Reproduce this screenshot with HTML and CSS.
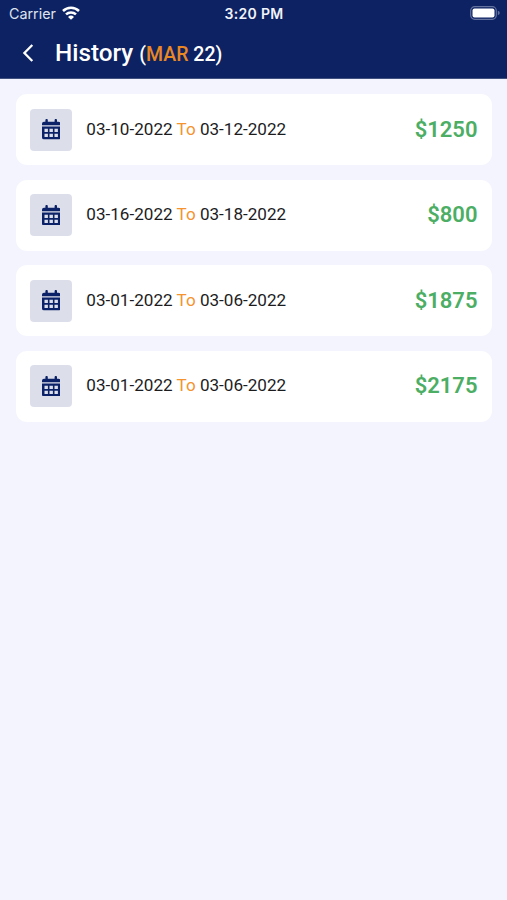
FILE: index.html
```html
<!DOCTYPE html>
<html lang="en">
<head>
<meta charset="utf-8">
<title>History</title>
<link rel="stylesheet" href="styles.css">
</head>
<body>
<svg class="defs" aria-hidden="true">
  <symbol id="calendar" viewBox="0 0 18.4 20.6">
    <path fill-rule="evenodd" d="M3.400 1.100a1.200 1.200 0 0 1 2.400 0V2.700h6.800V1.100a1.200 1.200 0 0 1 2.400 0V2.700h1.400a2 2 0 0 1 2 2V6.200H0V4.700a2 2 0 0 1 2-2h1.400zM0 7.400H18.400V18.600a2 2 0 0 1-2 2H2a2 2 0 0 1-2-2zM2.500 9.700v3.200h3.400V9.700zM7.500 9.700v3.200h3.400V9.700zM12.500 9.700v3.200h3.400V9.700zM2.500 14.800v3.200h3.400v-3.200zM7.500 14.800v3.200h3.400v-3.200zM12.500 14.800v3.200h3.400v-3.200z"/>
  </symbol>
</svg>
<header class="header">
  <div class="status">
    <div class="carrier">
      <span>Carrier</span>
      <svg class="wifi" viewBox="0 0 18 14">
        <path d="M1 5a11.300 11.300 0 0 1 16 0M4 8.400a7.200 7.200 0 0 1 10 0" fill="none" stroke="#fff" stroke-width="2.500"/>
        <path d="M9 13.800 6 10.900a4.300 4.300 0 0 1 6 0z" fill="#fff"/>
      </svg>
    </div>
    <time class="clock">3:20 PM</time>
    <svg class="battery" viewBox="0 0 30 14">
      <rect x=".7" y=".7" width="25.600" height="12.600" rx="4" fill="none" stroke="#64729f" stroke-width="1.200"/>
      <rect x="2.500" y="2.500" width="22" height="9" rx="2" fill="#fff"/>
      <path d="M27.800 4.800q2 .6 2 2.200t-2 2.200z" fill="#64729f"/>
    </svg>
  </div>
  <div class="bar">
    <svg class="back" viewBox="0 0 12 18"><path d="M10.300 1 2.400 9l7.900 8" fill="none" stroke="#fff" stroke-width="2.300"/></svg>
    <h1 class="title">History <span class="period">(<span class="accent">MAR</span> 22)</span></h1>
  </div>
</header>
<main class="list">
  <article class="card"><span class="tile"><svg class="icon"><use href="#calendar"/></svg></span><span class="dates">03-10-2022 <span class="to">To</span> 03-12-2022</span><span class="amount">$1250</span></article>
  <article class="card"><span class="tile"><svg class="icon"><use href="#calendar"/></svg></span><span class="dates">03-16-2022 <span class="to">To</span> 03-18-2022</span><span class="amount">$800</span></article>
  <article class="card"><span class="tile"><svg class="icon"><use href="#calendar"/></svg></span><span class="dates">03-01-2022 <span class="to">To</span> 03-06-2022</span><span class="amount">$1875</span></article>
  <article class="card"><span class="tile"><svg class="icon"><use href="#calendar"/></svg></span><span class="dates">03-01-2022 <span class="to">To</span> 03-06-2022</span><span class="amount">$2175</span></article>
</main>
</body>
</html>
```
FILE: styles.css
```css
* { box-sizing: border-box; }
body {
  margin: 0;
  min-height: 900px;
  background: #f3f4fd;
  font-family: Roboto, "Liberation Sans", sans-serif;
  color: #1c1c1e;
}
.defs { display: none; }
.header {
  height: 79px;
  background: #0c2262;
  color: #fff;
  border-bottom: 1px solid #41517f;
}
.status {
  display: grid;
  grid-template-columns: 1fr auto 1fr;
  align-items: center;
  height: 27px;
  padding: 0 7px 0 9px;
  font-family: Inter, "Liberation Sans", sans-serif;
}
.carrier {
  display: flex;
  align-items: center;
  gap: 6px;
  font-size: 14.3px;
  color: #dfe3f0;
}
.wifi { width: 18px; height: 14px; margin-top: -1px; }
.clock { font-size: 14px; font-weight: 600; letter-spacing: .3px; margin-right: 1px; color: #f1f3fa; }
.battery { width: 30px; height: 14px; justify-self: end; margin-top: -1px; }
.bar {
  display: flex;
  align-items: center;
  height: 51px;
  padding-left: 22px;
}
.back { width: 12px; height: 18px; margin-right: 21px; }
.title { margin: 2px 0 0; font-size: 24.3px; line-height: 30px; font-weight: 500; white-space: nowrap; }
.period { font-size: 19.5px; }
.accent { color: #e98722; }
.list {
  display: flex;
  flex-direction: column;
  gap: 14.5px;
  padding: 15px 15px 0 16px;
}
.card {
  display: flex;
  align-items: center;
  height: 71px;
  padding: 0 14.5px 0 14px;
  background: #fff;
  border-radius: 11px;
}
.tile {
  display: flex;
  align-items: center;
  justify-content: center;
  width: 42px;
  height: 42px;
  margin-right: 14.3px;
  border-radius: 4px;
  background: #dcdfea;
}
.icon { width: 18.4px; height: 20.6px; fill: #0c2268; }
.dates { font-size: 17.1px; white-space: nowrap; padding-bottom: 2px; }
.to { color: #f59331; }
.amount { margin-left: auto; padding-bottom: 1px; font-size: 22px; font-weight: 600; color: #4cae64; }
```
